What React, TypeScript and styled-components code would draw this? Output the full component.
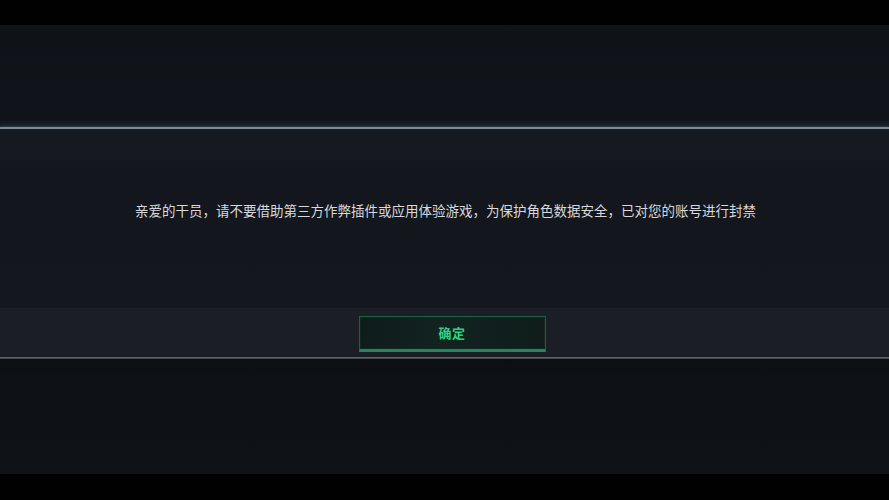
import React, { FC } from "react";
import styled, { createGlobalStyle } from "styled-components";

const GlobalStyle = createGlobalStyle`
  html, body {
    margin: 0;
    padding: 0;
    background: #000;
  }
  body {
    font-family: "Noto Sans CJK SC", "Noto Sans", sans-serif;
  }
`;

const Viewport = styled.div`
  width: 889px;
  height: 500px;
  background: #010101;
  display: flex;
  flex-direction: column;
  padding: 25px 0 26px;
  box-sizing: border-box;
`;

const Screen = styled.div`
  flex: 1;
  display: flex;
  flex-direction: column;
  background: #0f1217;
`;

const TopArea = styled.div`
  height: 96px;
  background: linear-gradient(#0f1217 0%, #10141a 100%);
`;

const GlowBand = styled.div`
  height: 6px;
  background: linear-gradient(#141920, #1a2028);
`;

const Divider = styled.div`
  height: 2px;
  background: #7f8a95;
  box-shadow: 0 0 3px rgba(140, 160, 175, 0.45);
`;

const Body = styled.div`
  height: 179px;
  background: linear-gradient(#161a21 0%, #13161c 30%, #14171d 100%);
  display: flex;
  align-items: flex-start;
  justify-content: center;
  padding: 72px 0 0 2px;
  box-sizing: border-box;
`;

const Message = styled.p`
  margin: 0;
  color: #d8d9dc;
  font-size: 13.5px;
  line-height: 18px;
  white-space: nowrap;
`;

const ActionBar = styled.div`
  height: 49px;
  background: #1b1e25;
  border-top: 1px solid #1e2229;
  display: flex;
  justify-content: center;
  align-items: flex-start;
  padding: 7px 0 0 15px;
  box-sizing: border-box;
`;

const ConfirmButton = styled.button`
  width: 187px;
  height: 36px;
  box-sizing: border-box;
  background: linear-gradient(100deg, #0e1c1a 0%, #122320 45%, #0f1c1a 100%);
  border: 1px solid #1f5f4a;
  border-bottom: 3px solid #23865f;
  box-shadow: inset 0 0 0 1px rgba(20, 40, 35, 0.8);
  color: #2bd47e;
  font-family: "Noto Sans CJK SC", sans-serif;
  font-size: 13px;
  font-weight: 700;
  letter-spacing: 0.5px;
  padding: 0 0 2px;
  cursor: pointer;
`;

const BottomLine = styled.div`
  height: 2px;
  background: linear-gradient(#6a6d72, #3a3d42);
`;

const LowerArea = styled.div`
  flex: 1;
  background: linear-gradient(#0b0e12 0%, #0e1116 20%, #0f1217 100%);
`;

const App: FC = () => {
  return (
    <>
      <GlobalStyle />
      <Viewport>
        <Screen>
          <TopArea />
          <GlowBand />
          <Divider />
          <Body>
            <Message>
              亲爱的干员，请不要借助第三方作弊插件或应用体验游戏，为保护角色数据安全，已对您的账号进行封禁
            </Message>
          </Body>
          <ActionBar>
            <ConfirmButton>确定</ConfirmButton>
          </ActionBar>
          <BottomLine />
          <LowerArea />
        </Screen>
      </Viewport>
    </>
  );
};

export default App;
